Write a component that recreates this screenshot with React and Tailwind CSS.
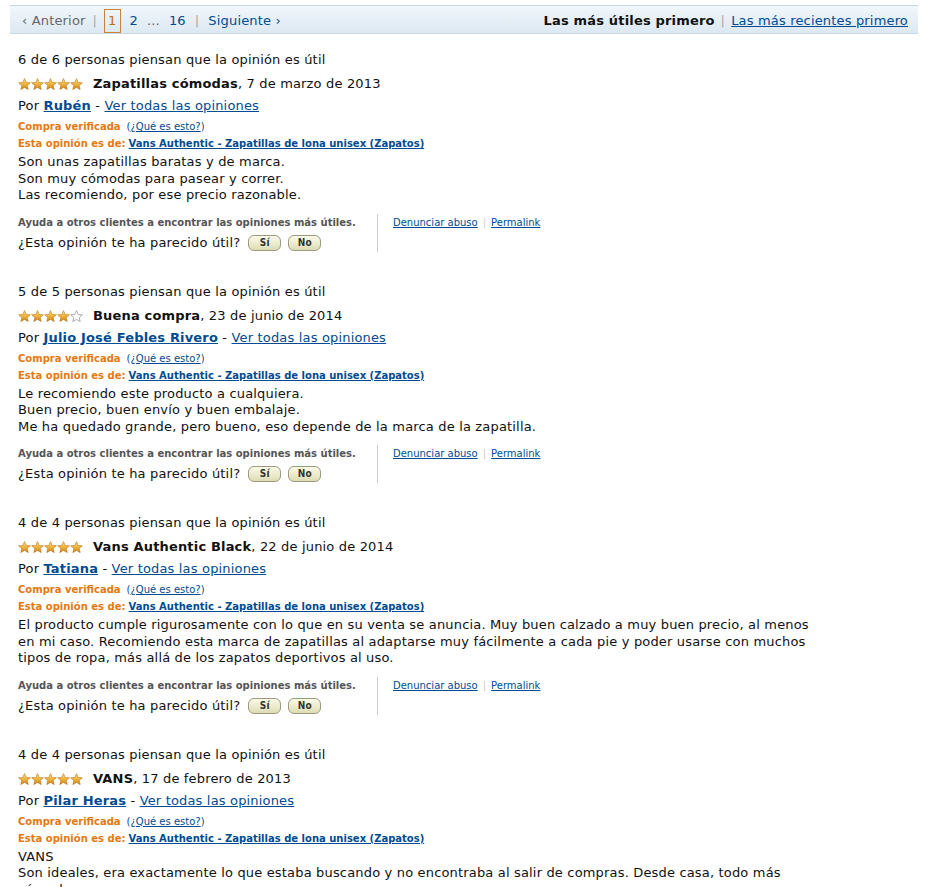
import React from 'react';

const font = { fontFamily: '"DejaVu Sans", Verdana, sans-serif' };

const reviews = [
  {
    votes: '6 de 6 personas piensan que la opinión es útil',
    stars: 5,
    title: 'Zapatillas cómodas',
    date: '7 de marzo de 2013',
    author: 'Rubén',
    body: [
      'Son unas zapatillas baratas y de marca.',
      'Son muy cómodas para pasear y correr.',
      'Las recomiendo, por ese precio razonable.',
    ],
  },
  {
    votes: '5 de 5 personas piensan que la opinión es útil',
    stars: 4,
    title: 'Buena compra',
    date: '23 de junio de 2014',
    author: 'Julio José Febles Rivero',
    body: [
      'Le recomiendo este producto a cualquiera.',
      'Buen precio, buen envío y buen embalaje.',
      'Me ha quedado grande, pero bueno, eso depende de la marca de la zapatilla.',
    ],
  },
  {
    votes: '4 de 4 personas piensan que la opinión es útil',
    stars: 5,
    title: 'Vans Authentic Black',
    date: '22 de junio de 2014',
    author: 'Tatiana',
    body: [
      'El producto cumple rigurosamente con lo que en su venta se anuncia. Muy buen calzado a muy buen precio, al menos en mi caso. Recomiendo esta marca de zapatillas al adaptarse muy fácilmente a cada pie y poder usarse con muchos tipos de ropa, más allá de los zapatos deportivos al uso.',
    ],
  },
  {
    votes: '4 de 4 personas piensan que la opinión es útil',
    stars: 5,
    title: 'VANS',
    date: '17 de febrero de 2013',
    author: 'Pilar Heras',
    body: [
      'VANS',
      'Son ideales, era exactamente lo que estaba buscando y no encontraba al salir de compras. Desde casa, todo más cómodo.',
    ],
  },
];

const STAR = 'M6.5 0.6 L8.2 4.5 L12.4 4.8 L9.2 7.5 L10.2 11.6 L6.5 9.4 L2.8 11.6 L3.8 7.5 L0.6 4.8 L4.8 4.5 Z';

function Stars({ count }) {
  return (
    <svg width="65" height="12" viewBox="0 0 65 12" className="shrink-0">
      <defs>
        <linearGradient id="gold" x1="0" y1="0" x2="0" y2="1">
          <stop offset="0" stopColor="#fde38a" />
          <stop offset="0.5" stopColor="#f0b43c" />
          <stop offset="1" stopColor="#c77f1a" />
        </linearGradient>
      </defs>
      {[0, 1, 2, 3, 4].map((i) => (
        <g key={i} transform={`translate(${i * 13} 0)`}>
          {i < count ? (
            <path d={STAR} fill="url(#gold)" stroke="#b8761e" strokeWidth="0.6" />
          ) : (
            <path d={STAR} fill="#fff" stroke="#9a9a9a" strokeWidth="0.8" />
          )}
        </g>
      ))}
    </svg>
  );
}

function VoteButton({ children }) {
  return (
    <button className="h-[16px] w-[33px] rounded-[6px] border border-[#9c9a7e] bg-gradient-to-b from-[#fbfbe9] to-[#dedcb4] text-[10px] font-bold leading-none text-[#333] [font-family:'Liberation_Sans_Narrow','DejaVu_Sans_Condensed',sans-serif]">
      {children}
    </button>
  );
}

function Review({ r }) {
  return (
    <div className="mb-[32px] tracking-[0.17px]">
      <div className="text-[13px] leading-[16px] text-[#111]">{r.votes}</div>
      <div className="mt-[8px] flex items-center h-[16px] text-[13px] text-[#111]">
        <Stars count={r.stars} />
        <span className="ml-[10px]">
          <b>{r.title}</b>, {r.date}
        </span>
      </div>
      <div className="mt-[6px] text-[13px] leading-[16px] text-[#111]">
        Por{' '}
        <a className="font-bold text-[#004b91] underline">{r.author}</a> -{' '}
        <a className="text-[#004b91] underline">Ver todas las opiniones</a>
      </div>
      <div className="mt-[6px] text-[10px] leading-[14px] tracking-normal">
        <span className="font-bold text-[#e47911]">Compra verificada</span>
        <span className="ml-[6px] text-[#004b91]">
          (<a className="underline">¿Qué es esto?</a>)
        </span>
      </div>
      <div className="mt-[3px] text-[10px] leading-[14px] tracking-normal">
        <span className="font-bold text-[#e47911]">Esta opinión es de:</span>{' '}
        <a className="font-bold text-[#004b91] underline">
          Vans Authentic - Zapatillas de lona unisex (Zapatos)
        </a>
      </div>
      <div className="mt-[3px] text-[13px] leading-[16.5px] text-[#111] max-w-[800px] h-[49.5px] overflow-hidden">
        {r.body.map((line, i) => (
          <div key={i}>{line}</div>
        ))}
      </div>
      <div className="mt-[10px] flex tracking-normal">
        <div className="w-[360px] border-r border-[#ccc] pt-[2px]">
          <div className="text-[10px] leading-[14px] font-bold text-[#555]">
            Ayuda a otros clientes a encontrar las opiniones más útiles.
          </div>
          <div className="mt-[6px] flex items-center gap-[7px] h-[16px] pb-[2px] text-[13px] text-[#111] tracking-[0.17px]">
            <span className="mr-[1px]">¿Esta opinión te ha parecido útil?</span>
            <VoteButton>Sí</VoteButton>
            <VoteButton>No</VoteButton>
          </div>
        </div>
        <div className="pl-[15px] pt-[2px] text-[10px] leading-[14px] text-[#004b91] flex items-start">
          <a className="underline">Denunciar abuso</a>
          <span className="mx-[5px] text-[#ccc]">|</span>
          <a className="underline">Permalink</a>
        </div>
      </div>
    </div>
  );
}

export default function App() {
  return (
    <div className="bg-white min-h-screen pt-[5px] px-[10px] overflow-hidden" style={font}>
      <div className="w-[908px] h-[29px] flex items-center justify-between pl-[12px] pr-[10px] pt-[2px] border-t border-b border-[#c6d7e6] bg-gradient-to-b from-[#f1f7fc] to-[#dce8f2] text-[13px] tracking-[0.17px]">
        <div className="flex items-center text-[#004b91]">
          <span className="text-[#666]">‹ Anterior</span>
          <span className="mx-[7px] text-[#aaa]">|</span>
          <span className="border border-[#c8853a] px-[3px] h-[24px] flex items-center text-[#c46a0e]">1</span>
          <span className="ml-[9px]">2</span>
          <span className="ml-[9px] text-[#666]">...</span>
          <span className="ml-[9px]">16</span>
          <span className="mx-[9px] text-[#aaa]">|</span>
          <span>Siguiente ›</span>
        </div>
        <div className="flex items-center">
          <b className="text-[#111]">Las más útiles primero</b>
          <span className="mx-[6px] text-[#aaa]">|</span>
          <a className="text-[#004b91] underline">Las más recientes primero</a>
        </div>
      </div>
      <div className="pl-[8px] pt-[18px]">
        {reviews.map((r, i) => (
          <Review key={i} r={r} />
        ))}
      </div>
    </div>
  );
}
